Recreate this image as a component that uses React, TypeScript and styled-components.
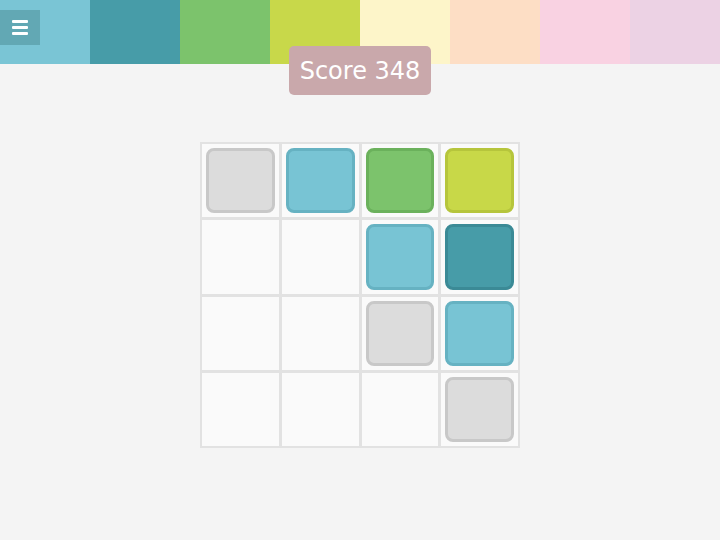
import React from 'react'
import styled, { createGlobalStyle } from 'styled-components';

type tileKind = "empty" | "gray" | "blue" | "teal" | "green" | "lime";

const tileColors: Record<tileKind, [string, string]> = {
    empty: ["transparent", "transparent"],
    gray: ["#dcdcdc", "#c8c8c8"],
    blue: ["#78c4d4", "#66b2c2"],
    teal: ["#479ca8", "#3b8a96"],
    green: ["#7cc36c", "#6bb15c"],
    lime: ["#c8d848", "#b6c53c"],
};

const stripes = ["#7ac5d5", "#479ca8", "#7cc36c", "#c8d84a", "#fdf5c9", "#fddec5", "#f9d2e2", "#ecd2e4"];

const board: tileKind[][] = [
    ["gray", "blue", "green", "lime"],
    ["empty", "empty", "blue", "teal"],
    ["empty", "empty", "gray", "blue"],
    ["empty", "empty", "empty", "gray"],
];

const GlobalStyle = createGlobalStyle`
    html, body {
        margin:0;
        padding:0;
        background:#f4f4f4;
        font-family:"DejaVu Sans", Verdana, sans-serif;
    }
`;

const Page = styled.div`
    position:relative;
    width:720px;
    height:540px;
    background:#f4f4f4;
    overflow:hidden;
`;

const Stripes = styled.div`
    display:grid;
    grid-template-columns:repeat(8, 1fr);
    height:64px;
`;

const Stripe = styled.div<{ $color: string }>`
    background:${p => p.$color};
`;

const MenuButton = styled.button`
    position:absolute;
    left:0;
    top:10px;
    width:40px;
    height:35px;
    border:none;
    padding:0;
    background:#62a8b4;
    display:flex;
    align-items:center;
    justify-content:center;
    cursor:pointer;
`;

const Burger = styled.div`
    display:flex;
    flex-direction:column;
    gap:3px;
    width:16px;

    span{
        display:block;
        height:3px;
        background:#fff;
        border-radius:1px;
    }
`;

const ScoreBadge = styled.div`
    position:absolute;
    left:289px;
    top:46px;
    width:142px;
    height:49px;
    border-radius:5px;
    background:#c9a8ab;
    color:#fff;
    font-size:24px;
    display:flex;
    align-items:center;
    justify-content:center;
`;

const Board = styled.div`
    margin:78px auto 0;
    width:316px;
    height:302px;
    padding:2px;
    display:grid;
    grid-template-columns:repeat(4, 1fr);
    grid-template-rows:repeat(4, 1fr);
    gap:3px;
    background:#e2e2e2;
`;

const Cell = styled.div`
    background:#fafafa;
    padding:4px;
    display:flex;
`;

const Tile = styled.div<{ $kind: tileKind }>`
    flex:1;
    border-radius:8px;
    background:${p => tileColors[p.$kind][0]};
    border:3px solid ${p => tileColors[p.$kind][1]};
`;

const App = () => {
  return (
    <Page>
        <GlobalStyle />
        <Stripes>
            {stripes.map((c, i) => <Stripe key={i} $color={c} />)}
        </Stripes>
        <MenuButton aria-label="menu">
            <Burger><span /><span /><span /></Burger>
        </MenuButton>
        <ScoreBadge>Score 348</ScoreBadge>
        <Board>
            {board.flat().map((k, i) => (
                <Cell key={i}>{k !== "empty" && <Tile $kind={k} />}</Cell>
            ))}
        </Board>
    </Page>
  )
}

export default App
